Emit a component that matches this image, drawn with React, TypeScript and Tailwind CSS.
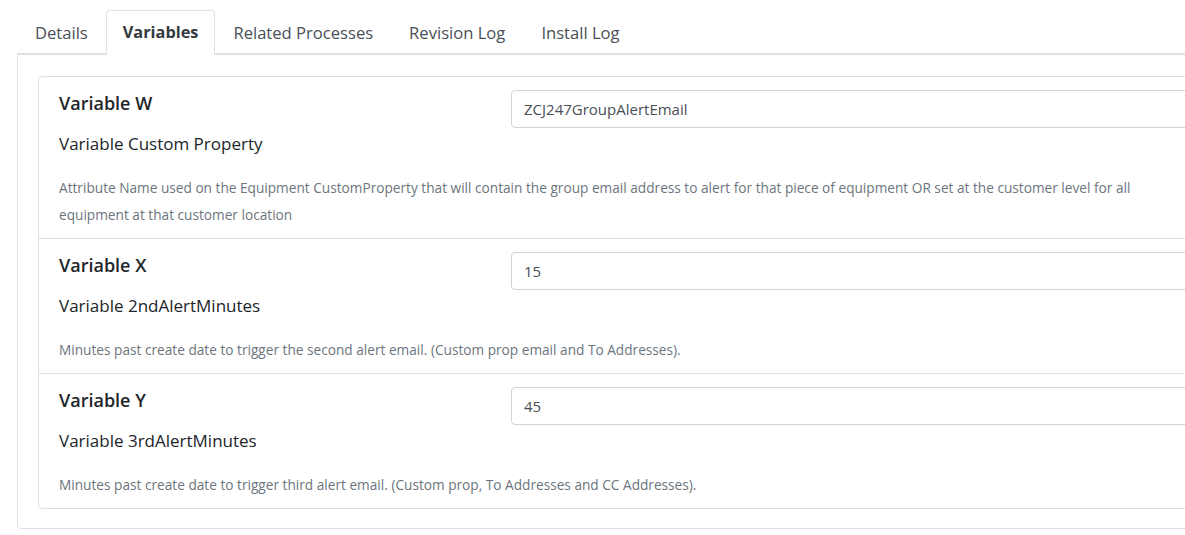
import React from "react";

const rows = [
  {
    title: "Variable W",
    sub: "Variable Custom Property",
    value: "ZCJ247GroupAlertEmail",
    desc: "Attribute Name used on the Equipment CustomProperty that will contain the group email address to alert for that piece of equipment OR set at the customer level for all equipment at that customer location",
  },
  {
    title: "Variable X",
    sub: "Variable 2ndAlertMinutes",
    value: "15",
    desc: "Minutes past create date to trigger the second alert email. (Custom prop email and To Addresses).",
  },
  {
    title: "Variable Y",
    sub: "Variable 3rdAlertMinutes",
    value: "45",
    desc: "Minutes past create date to trigger third alert email. (Custom prop, To Addresses and CC Addresses).",
  },
];

const tabs = ["Details", "Variables", "Related Processes", "Revision Log", "Install Log"];

export default function App() {
  return (
    <div
      className="w-[1185px] h-[535px] overflow-hidden bg-white"
      style={{ fontFamily: '"Open Sans", "Liberation Sans", Arial, sans-serif' }}
    >
      <div className="pl-[17px] pt-[10px] w-[1400px]">
        <div className="flex border-b-2 border-[#dee2e6] h-[45px]">
          {tabs.map((t) => {
            const active = t === "Variables";
            return (
              <div
                key={t}
                className={
                  active
                    ? "px-[16px] h-[45px] border border-[#dee2e6] border-b-white rounded-t-[4px] bg-white text-[16.3px] leading-[43px] font-bold text-[#343a40] -mb-[2px]"
                    : "px-[17px] h-[43px] border border-transparent text-[16.6px] leading-[43px] text-[#495057]"
                }
              >
                {t}
              </div>
            );
          })}
        </div>
        <div className="border border-t-0 border-[#dee2e6] rounded-b-[4px] p-[20px] pt-[21px] h-[474px]">
          <div className="border border-[#dfdfdf] rounded-[4px]">
            {rows.map((r, i) => (
              <div
                key={r.title}
                className={
                  "px-[20px] pt-[12px] pb-[10px] " + (i > 0 ? "border-t border-[#dfdfdf]" : "")
                }
              >
                <div className="flex">
                  <div className="w-[452px] shrink-0">
                    <div className="text-[18px] leading-[28px] font-semibold text-[#212529]">{r.title}</div>
                    <div className="mt-[14px] text-[17px] leading-[26px] text-[#212529]">{r.sub}</div>
                  </div>
                  <div className="flex-1 pt-[1px]">
                    <div className="h-[38px] border border-[#ced4da] rounded-[4px] px-[12px] text-[15px] leading-[36px] text-[#495057]">
                      {r.value}
                    </div>
                  </div>
                </div>
                <div className="mt-[17px] max-w-[1100px] text-[13.66px] leading-[27px] text-[#6c757d]">
                  {r.desc}
                </div>
              </div>
            ))}
          </div>
        </div>
      </div>
    </div>
  );
}
